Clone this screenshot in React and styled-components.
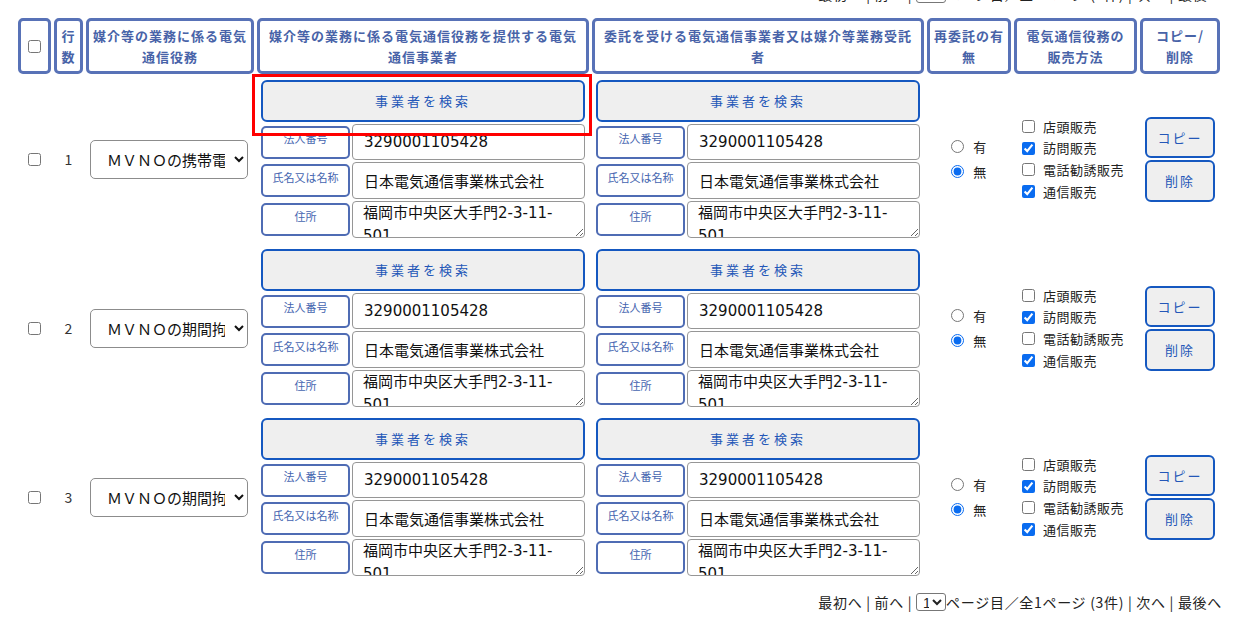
import React from "react";
import styled, { createGlobalStyle } from "styled-components";

const GlobalStyle = createGlobalStyle`
  html, body {
    margin: 0;
    padding: 0;
    background: #ffffff;
    font-family: "Noto Sans CJK JP", "Noto Sans", sans-serif;
    color: #222;
    overflow: hidden;
  }
`;

const COLS = "33px 29px 168px 332px 332px 84px 123px 80px";

const Page = styled.div`
  width: 1204px;
  margin: -16px 0 0 18px;
`;

const Pager = styled.div`
  display: flex;
  justify-content: flex-end;
  align-items: center;
  height: 20px;
  font-size: 14px;
  line-height: 20px;
  letter-spacing: 0.7px;
  color: #222;
  white-space: pre;
  margin-top: ${(p) => p.$top || 0}px;
`;

const PageSelect = styled.select`
  width: 30px;
  height: 18px;
  font-size: 14px;
  padding: 0 0 0 2px;
  border: 1px solid #777;
  border-radius: 3px;
  background: #fff;
  color: #222;
  font-family: "Liberation Sans", sans-serif;
`;

const HeadRow = styled.div`
  display: grid;
  grid-template-columns: ${COLS};
  column-gap: 3px;
  margin-top: 14px;
  height: 56px;
`;

const Th = styled.div`
  box-sizing: border-box;
  border: 3px solid #5872b7;
  border-radius: 5px;
  display: flex;
  align-items: center;
  justify-content: center;
  text-align: center;
  padding: 2px 4px;
  font-size: 13px;
  font-weight: bold;
  letter-spacing: 1px;
  line-height: 21px;
  color: #4863a8;
`;

const Body = styled.div`
  display: flex;
  flex-direction: column;
  gap: 11px;
  padding-top: 6px;
`;

const Row = styled.div`
  display: grid;
  grid-template-columns: ${COLS};
  column-gap: 3px;
  align-items: center;
`;

const Center = styled.div`
  display: flex;
  justify-content: center;
  align-items: center;
  font-size: 14px;
  color: #333;
`;

const Check = styled.input.attrs({ type: "checkbox" })`
  width: 13px;
  height: 13px;
  margin: 0;
  accent-color: #0a6cf0;
`;

const ServiceSelect = styled.select`
  width: 158px;
  height: 39px;
  margin-left: 4px;
  padding: 0 6px 0 12px;
  border: 1px solid #8c8c8c;
  border-radius: 5px;
  background: #fff;
  font-size: 15px;
  font-family: "Noto Sans CJK JP", sans-serif;
  color: #111;
`;

const Party = styled.div`
  position: relative;
  display: flex;
  flex-direction: column;
  gap: 2px;
  padding: 0 4px;
`;

const Highlight = styled.div`
  position: absolute;
  top: -6px;
  left: -5px;
  width: 340px;
  height: 62px;
  box-sizing: border-box;
  border: 3px solid #ff0000;
  pointer-events: none;
`;

const SearchButton = styled.button`
  height: 42px;
  box-sizing: border-box;
  border: 2px solid #1558c0;
  border-radius: 6px;
  background: #efefef;
  color: #2457b8;
  font-size: 13px;
  letter-spacing: 3px;
  font-family: inherit;
  padding-bottom: 2px;
`;

const Field = styled.div`
  display: grid;
  grid-template-columns: 89px 233px;
  column-gap: 2px;
  align-items: center;
  height: ${(p) => p.$h}px;
`;

const FieldLabel = styled.div`
  height: 33px;
  box-sizing: border-box;
  border: 2px solid #4f6cb4;
  border-radius: 5px;
  background: #fff;
  display: flex;
  align-items: center;
  justify-content: center;
  padding-bottom: 8px;
  font-size: 11px;
  color: #4565b0;
`;

const TextInput = styled.input`
  height: 100%;
  box-sizing: border-box;
  border: 1px solid #969696;
  border-radius: 4px;
  padding: 0 11px;
  font-size: 15px;
  font-family: "DejaVu Sans", "Noto Sans CJK JP", sans-serif;
  color: #111;
  background: #fff;
`;

const AddressArea = styled.textarea`
  height: 100%;
  box-sizing: border-box;
  border: 1px solid #969696;
  border-radius: 4px;
  padding: 0 10px;
  font-size: 15px;
  line-height: 23px;
  font-family: "DejaVu Sans", "Noto Sans CJK JP", sans-serif;
  color: #111;
  background: #fff;
  overflow: hidden;
  resize: both;
`;

const Choices = styled.div`
  display: flex;
  flex-direction: column;
  gap: ${(p) => p.$gap}px;
  align-self: center;
  justify-self: ${(p) => p.$justify || "center"};
  padding-left: ${(p) => p.$pad || 0}px;
  font-size: 13px;
  color: #222;
`;

const Choice = styled.label`
  display: flex;
  align-items: center;
  gap: ${(p) => p.$gap}px;
  line-height: ${(p) => p.$lh}px;
  letter-spacing: 0.5px;
`;

const Radio = styled.input.attrs({ type: "radio" })`
  width: 13px;
  height: 13px;
  margin: 0;
  accent-color: #0a6cf0;
`;

const Actions = styled.div`
  display: flex;
  flex-direction: column;
  align-items: center;
  gap: 2px;
`;

const ActionButton = styled.button`
  width: 70px;
  height: ${(p) => p.$h}px;
  box-sizing: border-box;
  border: 2px solid #1558c0;
  border-radius: 6px;
  background: #efefef;
  color: #2457b8;
  font-size: 13px;
  letter-spacing: 2px;
  font-family: inherit;
`;

const rows = [
  { no: 1, service: "ＭＶＮＯの携帯電話サービス" },
  { no: 2, service: "ＭＶＮＯの期間拘束のある携帯電話サービス" },
  { no: 3, service: "ＭＶＮＯの期間拘束のある携帯電話サービス" },
];

const company = {
  corpNo: "3290001105428",
  name: "日本電気通信事業株式会社",
  address: "福岡市中央区大手門2-3-11-501",
};

const salesMethods = [
  { label: "店頭販売", on: false },
  { label: "訪問販売", on: true },
  { label: "電話勧誘販売", on: false },
  { label: "通信販売", on: true },
];

const Pagination = ({ top }) => (
  <Pager $top={top}>
    {"最初へ | 前へ | "}
    <PageSelect defaultValue="1">
      <option value="1">1</option>
    </PageSelect>
    {"ページ目／全1ページ (3件) | 次へ | 最後へ"}
  </Pager>
);

const PartyCell = ({ highlight }) => (
  <Party>
    {highlight && <Highlight />}
    <SearchButton>事業者を検索</SearchButton>
    <Field $h={36}>
      <FieldLabel>法人番号</FieldLabel>
      <TextInput defaultValue={company.corpNo} />
    </Field>
    <Field $h={37}>
      <FieldLabel>氏名又は名称</FieldLabel>
      <TextInput defaultValue={company.name} />
    </Field>
    <Field $h={37}>
      <FieldLabel>住所</FieldLabel>
      <AddressArea defaultValue={company.address} />
    </Field>
  </Party>
);

const App = () => (
  <>
    <GlobalStyle />
    <Page>
      <Pagination />
      <HeadRow>
        <Th>
          <Check />
        </Th>
        <Th>行数</Th>
        <Th>媒介等の業務に係る電気通信役務</Th>
        <Th>媒介等の業務に係る電気通信役務を提供する電気通信事業者</Th>
        <Th>委託を受ける電気通信事業者又は媒介等業務受託者</Th>
        <Th>再委託の有無</Th>
        <Th>電気通信役務の販売方法</Th>
        <Th>
          コピー/
          <br />
          削除
        </Th>
      </HeadRow>
      <Body>
        {rows.map((r, i) => (
          <Row key={r.no}>
            <Center>
              <Check />
            </Center>
            <Center>{r.no}</Center>
            <ServiceSelect defaultValue={r.service}>
              <option value={r.service}>{r.service}</option>
            </ServiceSelect>
            <PartyCell highlight={i === 0} />
            <PartyCell />
            <Choices $gap={6}>
              <Choice $gap={9} $lh={19}>
                <Radio name={`resub-${r.no}`} />有
              </Choice>
              <Choice $gap={9} $lh={19}>
                <Radio name={`resub-${r.no}`} defaultChecked />無
              </Choice>
            </Choices>
            <Choices $gap={0} $justify="start" $pad={8}>
              {salesMethods.map((m) => (
                <Choice key={m.label} $gap={8} $lh={21.7}>
                  <Check defaultChecked={m.on} />
                  {m.label}
                </Choice>
              ))}
            </Choices>
            <Actions>
              <ActionButton $h={41}>コピー</ActionButton>
              <ActionButton $h={42}>削除</ActionButton>
            </Actions>
          </Row>
        ))}
      </Body>
      <Pagination top={16} />
    </Page>
  </>
);

export default App;
